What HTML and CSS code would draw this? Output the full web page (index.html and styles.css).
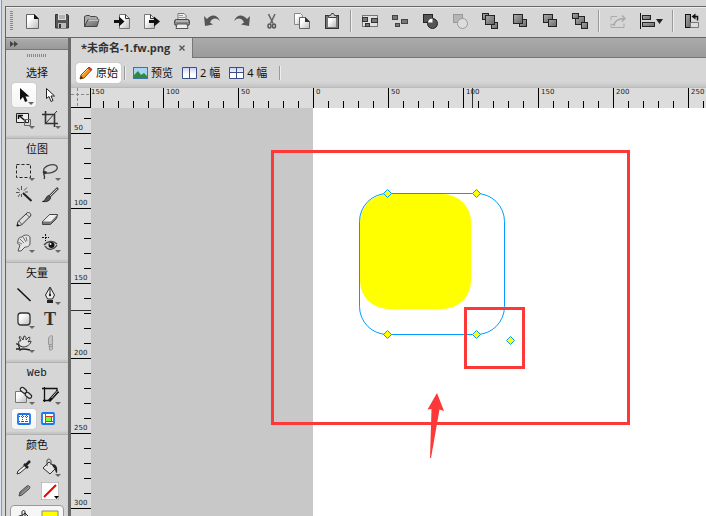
FILE: index.html
```html
<!DOCTYPE html>
<html lang="zh-CN">
<head>
<meta charset="utf-8">
<title>未命名-1.fw.png</title>
<link rel="stylesheet" href="styles.css">
</head>
<body>
<svg class="defs" aria-hidden="true">
  <defs>
    <linearGradient id="paper" x1="0" y1="0" x2="1" y2="1"><stop offset=".3" stop-color="#fff"/><stop offset="1" stop-color="#bbb"/></linearGradient>
    <linearGradient id="metal" x1="0" y1="0" x2="1" y2="1"><stop offset="0" stop-color="#aaa"/><stop offset="1" stop-color="#666"/></linearGradient>
    <linearGradient id="win" x1="0" y1="0" x2="0" y2="1"><stop offset="0" stop-color="#c3c9f2"/><stop offset=".6" stop-color="#fff"/></linearGradient>
  </defs>
</svg>
<div class="app">
  <div class="edge"></div>
  <div class="frame">
    <header class="toolbar">
      <span class="grip"></span>
      <button class="tool" aria-label="新建"><svg viewBox="0 0 18 18"><path d="M3.500 2.500h8l4 4v10h-12z" fill="url(#paper)" stroke="#666"/><path d="M11 2v5h5z" fill="#111"/></svg></button>
      <button class="tool" aria-label="保存"><svg viewBox="0 0 18 18"><path d="M2.500 2.500h12l1 1v12.500h-13z" fill="#555" stroke="#333"/><path d="M5 2h8v6H5z" fill="#ddd"/><path d="M6 4h6M6 6h6" stroke="#888"/><path d="M5 11h8v5H5z" fill="#bbb"/><path d="M6 12h2v4H6z" fill="#333"/></svg></button>
      <button class="tool" aria-label="打开"><svg viewBox="0 0 18 18"><path d="M1.500 14.500v-10l2-1h3l1 1h5l2 1v3" fill="#aaa" stroke="#444"/><path d="M1.500 14.500 5 7.500h11l-2 7z" fill="url(#metal)" stroke="#444"/><path d="M5.500 8h10" stroke="#eee"/></svg></button>
      <button class="tool" aria-label="导入"><svg viewBox="0 0 18 18"><path d="M6.500 2.500h6l4 4v10h-10z" fill="url(#paper)" stroke="#777"/><path d="M12.500 2.500v4h4" fill="none" stroke="#333"/><path d="M1 8h5V4.500l5.500 5-5.500 5V11H1z" fill="#111"/></svg></button>
      <button class="tool" aria-label="导出"><svg viewBox="0 0 18 18"><path d="M1.500 2.500h6l4 4v10h-10z" fill="url(#paper)" stroke="#777"/><path d="M7.500 2.500v4h4" fill="none" stroke="#333"/><path d="M6 8h5V4.500l6 5-6 5V11H6z" fill="#111"/></svg></button>
      <button class="tool" aria-label="打印"><svg viewBox="0 0 18 18"><path d="M5 7V1.500h6l2 2V7" fill="#eee" stroke="#777"/><path d="M6 3.500h4M6 5.500h6" stroke="#999"/><rect x="1.500" y="7.500" width="15" height="6" rx="2" fill="#888" stroke="#444"/><path d="M3 9h12" stroke="#ddd"/><path d="m4 12-1 4.500h12L14 12z" fill="#eee" stroke="#555"/></svg></button>
      <button class="tool" aria-label="撤销"><svg viewBox="0 0 18 18"><path d="M1 4 2 14l8-1.500-3-2C9 6 13 5 17 9 14 2 8 2 4 7z" fill="#555"/></svg></button>
      <button class="tool" aria-label="重做"><svg viewBox="0 0 18 18"><path d="M17 4 16 14l-8-1.500 3-2C9 6 5 5 1 9 4 2 10 2 14 7z" fill="#555"/></svg></button>
      <button class="tool" aria-label="剪切"><svg viewBox="0 0 18 18"><path d="M5.500 2l4.500 9.500M12 2l-4.500 9.500" stroke="#666" stroke-width="1.600"/><g fill="none" stroke="#555" stroke-width="1.500"><ellipse cx="6.500" cy="14" rx="1.500" ry="2"/><ellipse cx="11" cy="14" rx="1.500" ry="2"/></g></svg></button>
      <button class="tool" aria-label="复制"><svg viewBox="0 0 18 18"><path d="M1.500 1.500h6l2 2v9h-8z" fill="url(#paper)" stroke="#888"/><path d="M6.500 5.500h6l4 4v7h-10z" fill="url(#paper)" stroke="#666"/><path d="M12 5v5h5z" fill="#333"/></svg></button>
      <button class="tool" aria-label="粘贴"><svg viewBox="0 0 18 18"><rect x="2.500" y="3.500" width="13" height="13" fill="#777" stroke="#333"/><path d="M5 5h8v10H5z" fill="url(#paper)"/><path d="M5.500 5.500v-2h2l1-2h2l1 2h2v2z" fill="#ccc" stroke="#444"/></svg></button>
      <span class="bar"></span>
      <button class="tool" aria-label="组合"><svg viewBox="0 0 18 18"><rect x="1.500" y="3.500" width="15" height="11" fill="#e2e2e2" stroke="#111" stroke-dasharray="1 1"/><g fill="#777" stroke="#333"><rect x="1.500" y="5.500" width="5" height="4"/><rect x="10.500" y="6.500" width="6" height="4"/><rect x="4.500" y="11.500" width="4" height="3"/></g></svg></button>
      <button class="tool" aria-label="取消组合"><svg viewBox="0 0 18 18"><g fill="#777" stroke="#444"><rect x="1.500" y="3.500" width="5" height="4"/><rect x="10.500" y="7.500" width="6" height="4"/><rect x="4.500" y="11.500" width="4" height="3"/></g></svg></button>
      <button class="tool" aria-label="联合"><svg viewBox="0 0 18 18"><rect x="2.500" y="2.500" width="9" height="8" fill="#555" stroke="#222"/><circle cx="11.500" cy="11.500" r="5" fill="#555" stroke="#222"/><path d="M7 10.500h4.500V6.500C9 6.500 7 8 7 10.500" fill="#fff"/></svg></button>
      <button class="tool" aria-label="拆分" disabled><svg viewBox="0 0 18 18"><rect x="2.500" y="2.500" width="9" height="8" fill="#b5b5b5" stroke="#999"/><circle cx="11.500" cy="11.500" r="5" fill="#ddd" stroke="#999"/></svg></button>
      <button class="tool" aria-label="移到最前"><svg viewBox="0 0 18 18"><g fill="url(#metal)" stroke="#222"><rect x="1.500" y="1.500" width="6" height="6"/><rect x="10.500" y="10.500" width="6" height="6"/><rect x="4.500" y="3.500" width="9" height="9"/></g></svg></button>
      <button class="tool" aria-label="前移"><svg viewBox="0 0 18 18"><g fill="url(#metal)" stroke="#222"><rect x="8.500" y="7.500" width="7" height="7"/><rect x="2.500" y="2.500" width="9" height="9"/></g></svg></button>
      <button class="tool" aria-label="后移"><svg viewBox="0 0 18 18"><g fill="url(#metal)" stroke="#222"><rect x="2.500" y="2.500" width="9" height="8"/><rect x="7.500" y="7.500" width="8" height="7"/></g></svg></button>
      <button class="tool" aria-label="移到最后"><svg viewBox="0 0 18 18"><g fill="url(#metal)" stroke="#222"><rect x="4.500" y="4.500" width="9" height="8"/><rect x="1.500" y="1.500" width="6" height="5"/><rect x="10.500" y="10.500" width="6" height="6"/></g></svg></button>
      <span class="bar"></span>
      <button class="tool" aria-label="转换" disabled><svg viewBox="0 0 18 18"><g fill="none" stroke="#aaa"><path d="M2 8.500v-4h6M2 11.500v4h13v-4M2.500 12.500h3"/><path d="M5 14c0-5 3-7 10-7.500M13 3.500l3 3-3 3" stroke-width="1.500"/></g></svg></button>
      <button class="tool tool-wide" aria-label="对齐"><svg class="wide" viewBox="0 0 26 18"><path d="M2.500 1v16" stroke="#111"/><rect x="4.500" y="3.500" width="8" height="4" fill="url(#metal)" stroke="#222"/><rect x="4.500" y="10.500" width="12" height="4" fill="url(#metal)" stroke="#222"/><path d="M18 7h7l-3.500 5z" fill="#222"/></svg></button>
      <span class="bar"></span>
      <button class="tool" aria-label="旋转"><svg viewBox="0 0 18 18"><rect x="2.500" y="2.500" width="5" height="13" fill="url(#metal)" stroke="#111"/><path d="M7.500 15.500h8v-5h-8z" fill="#ddd" stroke="#777"/><path d="M10 4.500h4.500v4" fill="none" stroke="#111" stroke-width="1.500"/><path d="M8.500 4.500l4-3v6z" fill="#111"/></svg></button>
    </header>
    <div class="work">
      <aside class="panel">
        <div class="panel-head"><svg class="chev" viewBox="0 0 8 6"><path d="M0 0l4 3-4 3zM4 0l4 3-4 3z" fill="#444"/></svg></div>
        <div class="panel-grip"></div>
        <section class="group">
          <h2>选择</h2>
          <div class="grid">
            <button class="cell on" aria-label="指针"><svg viewBox="0 0 18 18"><path d="M5 2v12l3-3 2 5 2.500-1-2-4.500h4z" fill="#111"/></svg><i></i></button>
            <button class="cell" aria-label="部分选定"><svg viewBox="0 0 18 18"><path d="M5.500 2.500v10l2.500-2 2 5 2-1-2-4.500h3.500z" fill="#fff" stroke="#222"/></svg></button>
            <button class="cell" aria-label="缩放"><svg viewBox="0 0 18 18"><path d="M1.500 3.500h12v9h-12z" fill="#eee" stroke="#222"/><path d="M4 5.500l7 6M3.500 9V5.500H8" fill="none" stroke="#111" stroke-width="1.500"/><path d="M9.500 9.500h6v6h-6z" fill="none" stroke="#666"/></svg><i></i></button>
            <button class="cell" aria-label="裁剪"><svg viewBox="0 0 18 18"><path d="M4.500 1v12.500H17M1 4.500h12.500V17" fill="none" stroke="#333" stroke-width="1.600"/><path d="M4 14 16 1" stroke="#333"/></svg><i></i></button>
          </div>
        </section>
        <section class="group">
          <h2>位图</h2>
          <div class="grid">
            <button class="cell" aria-label="选取框"><svg viewBox="0 0 18 18"><rect x="1.500" y="2.500" width="14" height="13" fill="none" stroke="#222" stroke-dasharray="3 2"/></svg><i></i></button>
            <button class="cell" aria-label="套索"><svg viewBox="0 0 18 18"><ellipse cx="9.500" cy="7" rx="7" ry="4" fill="none" stroke="#444" stroke-width="1.300" transform="rotate(-15 9 7)"/><path d="M3 9c-2 2 1 3 2 2s-1-2-2 0c-1 3 2 3 0 6" fill="none" stroke="#333" stroke-width="1.300"/></svg><i></i></button>
            <button class="cell" aria-label="魔术棒"><svg viewBox="0 0 18 18"><path d="M8 7l8.500 8" stroke="#222" stroke-width="2"/><path d="M6.500 0v4M6.500 8v3M1 6.500h3.500M9 4.500l3-3M2 2l3 2.500M3 11l2-3M10 6h3" stroke="#555"/></svg></button>
            <button class="cell" aria-label="刷子"><svg viewBox="0 0 18 18"><path d="M17 2 9 10" stroke="#444" stroke-width="2.500"/><path d="M16 3 9 10" stroke="#ccc"/><path d="M1.500 15.500c4-1 3-6 7-6 3 3-1 7-7 6z" fill="#555" stroke="#222"/></svg></button>
            <button class="cell" aria-label="铅笔"><svg viewBox="0 0 18 18"><path d="M2 16l1-4.500L12 3c1-1.500 5 .500 3.500 3L6.500 15z" fill="#ddd" stroke="#333"/><path d="M11 4l4 3.500M4 11l3 3.500" stroke="#666"/><path d="M1.500 16.500l1-3 2 2z" fill="#111"/></svg></button>
            <button class="cell" aria-label="橡皮擦"><svg viewBox="0 0 18 18"><path d="M1.500 11.500 8.500 4.500h8l-1 4-6 6h-8z" fill="#777" stroke="#444"/><path d="M2 11.500 8.500 5H16l-6 6.500z" fill="#eee"/></svg></button>
            <button class="cell" aria-label="模糊"><svg viewBox="0 0 18 18"><path d="M3 17l2-6C2 10 2 8 3 7c0-3 2-4 4-4 2-3 7-2 8 0v7c-1 3-3 3-5 3l-4 4z" fill="#e4e4e4" stroke="#555"/><path d="M5 5l4 4M8 3l3 5M3 8l4 2M11 3l1 4" stroke="#777"/></svg><i></i></button>
            <button class="cell" aria-label="红眼消除"><svg viewBox="0 0 18 18"><path d="M4.500 0v7M1 3.500h7" stroke="#111" stroke-dasharray="2 1"/><path d="M3 11c3-4 9-5 13-1M4 12c3 5 9 4 12-1" fill="none" stroke="#444" stroke-width="1.300"/><circle cx="10.500" cy="11" r="3" fill="#111"/><circle cx="9.500" cy="10" r="1" fill="#fff"/></svg><i></i></button>
          </div>
        </section>
        <section class="group">
          <h2>矢量</h2>
          <div class="grid">
            <button class="cell" aria-label="直线"><svg viewBox="0 0 18 18"><path d="M2.500 2.500 15.500 15" stroke="#111" stroke-width="1.500"/></svg></button>
            <button class="cell" aria-label="钢笔"><svg viewBox="0 0 18 18"><path d="M9 1 4.500 9l2 4h5l2-4z" fill="#eee" stroke="#222"/><path d="M9 2v6" stroke="#222"/><circle cx="9" cy="9" r="1.200" fill="#222"/><path d="M6 14h6v3H6z" fill="#222"/></svg><i></i></button>
            <button class="cell" aria-label="圆角矩形"><svg viewBox="0 0 18 18"><rect x="3" y="3" width="12" height="12" rx="3" fill="url(#paper)" stroke="#333" stroke-width="1.300"/></svg><i></i></button>
            <button class="cell letter" aria-label="文本">T</button>
            <button class="cell" aria-label="自由变形"><svg viewBox="0 0 18 18"><path d="M5 12C3 9 3 6 6 7L4 3c1-1 2 0 4 3L9 2c2 0 2 2 2 4l3-3c2 0 0 3-1 5l3-1c0 3-4 6-8 6z" fill="#e4e4e4" stroke="#333"/><path d="M1 10c3-1 3 3 4 6 2-2 6-1 10 0M1 15h4" fill="none" stroke="#222" stroke-width="1.300"/></svg><i></i></button>
            <button class="cell" aria-label="刀子" disabled><svg viewBox="0 0 18 18"><path d="M7.500 10.500V4c1-2 3-3 4-2v8.500zM7.500 12.500h4M8.500 11v5h2l1-1v-4" fill="#c4c4c4" stroke="#999"/></svg></button>
          </div>
        </section>
        <section class="group group-short">
          <h2 class="latin">Web</h2>
          <div class="grid">
            <button class="cell" aria-label="热点"><svg viewBox="0 0 18 18"><path d="M.500 5.500h11v11h-11z" fill="url(#paper)" stroke="#777"/><g fill="#ddd" stroke="#222" stroke-width="1.200"><rect x="5" y="2" width="7" height="4" rx="2" transform="rotate(40 8 4)"/><rect x="10" y="7" width="7" height="4" rx="2" transform="rotate(40 13 9)"/></g></svg><i></i></button>
            <button class="cell" aria-label="切片"><svg viewBox="0 0 18 18"><path d="M3.500 1v15M1 2.500h15v3M2 14.500h7" fill="none" stroke="#111" stroke-width="1.300"/><path d="M17 5 8 15" stroke="#111" stroke-width="3"/><path d="M16.500 5l-6 7" stroke="#bbb"/></svg><i></i></button>
            <button class="cell on cell-low" aria-label="隐藏切片"><svg viewBox="0 0 18 18"><rect x="3" y="4" width="12" height="10" rx="1" fill="#fff" stroke="#1976ed" stroke-width="1.800"/><path d="M4 6.500h10M4 11.500h10M7.500 5v8M11.500 5v8" stroke="#555" stroke-dasharray="1 1"/></svg></button>
            <button class="cell cell-low" aria-label="显示切片"><svg viewBox="0 0 18 18"><rect x="1" y="3" width="12" height="11" rx="1" fill="#fff" stroke="#1976ed" stroke-width="1.800"/><path d="M5 6h5v5H5z" fill="#7f3"/><path d="M4.500 4v9M4 6.500h8M4 11.500h8M10.500 6v5" stroke="#d32"/></svg></button>
          </div>
        </section>
        <section class="group">
          <h2>颜色</h2>
          <div class="grid">
            <button class="cell" aria-label="滴管"><svg viewBox="0 0 18 18"><path d="M2 16l1-3 7-6 2 2-7 6z" fill="#eee" stroke="#333"/><path d="M9 6l4 4M11 7l4-4" stroke="#222" stroke-width="2.500"/></svg></button>
            <button class="cell" aria-label="油漆桶"><svg viewBox="0 0 18 18"><path d="M2 10l6-6 7 6-6 6z" fill="#e4e4e4" stroke="#333"/><path d="M6 8V3c0-3 4-2 4 0v4" fill="none" stroke="#444"/><path d="M11 6c4 0 6 3 5 9-2 0-1-4-4-6z" fill="#222"/></svg><i></i></button>
            <button class="cell" aria-label="笔触颜色"><svg viewBox="0 0 18 18"><path d="M4 14l1-4 7-6c2-1 4 1 2 3l-7 6z" fill="#999" stroke="#444"/><path d="M5 12l8-7" stroke="#666"/></svg></button>
            <button class="cell" aria-label="无笔触"><svg viewBox="0 0 18 18"><path d="M0 0h18v18H0z" fill="#fff" stroke="#888"/><path d="M3 15 15 3" stroke="#e00" stroke-width="2"/><path d="M13 14h5l-2.500 3z" fill="#000"/></svg></button>
          </div>
          <div class="fill">
            <button class="cell" aria-label="填充颜色"><svg viewBox="0 0 18 18"><path d="M4 9l6-5 5 5-5 6z" fill="#ddd" stroke="#222"/><path d="M7 8V3c0-2 3-2 3 0v4" fill="none" stroke="#222"/><path d="M3 7l3-1v6H3z" fill="#222"/></svg></button>
            <button class="cell" aria-label="黄色填充"><svg viewBox="0 0 18 18"><path d="M1 2h16v16H1z" fill="#ff0" stroke="#888"/></svg></button>
          </div>
        </section>
      </aside>
      <main class="doc">
        <div class="tabs"><div class="tab"><span>*未命名-1.fw.png</span><button class="close" aria-label="关闭"><svg viewBox="0 0 6 6"><path d="M.500 .500l5 5M5.500 .500l-5 5" stroke="#555" stroke-width="1.400"/></svg></button></div></div>
        <nav class="views">
          <button class="view view-on"><svg viewBox="0 0 14 14"><path d="M1 13l1-4 8-8 3 2.500L5 12z" fill="#f7941d" stroke="#8a4b12"/><path d="M3 9l7-7" stroke="#ffd36b"/><path d="M10 1l3 2.500-1.500 1.500L9 2.500z" fill="#c33"/><path d="M1 13l1-3 2 2z" fill="#222"/></svg>原始</button>
          <span class="bar"></span>
          <button class="view"><svg class="pic" viewBox="0 0 15 12"><rect x=".500" y=".500" width="14" height="11" fill="#a9d5f5" stroke="#4470a8"/><path d="M1 8l4-4 3 4 3-2 3 3v2H1z" fill="#2e8b37"/></svg>预览</button>
          <button class="view"><svg class="pic" viewBox="0 0 15 12"><path d="M.500 .500h14v11H.500zM7.500 0v12" fill="url(#win)" stroke="#3a4f86"/></svg>2 幅</button>
          <button class="view"><svg class="pic" viewBox="0 0 15 12"><path d="M.500 .500h14v11H.500zM7.500 0v12M0 5.500h15" fill="url(#win)" stroke="#3a4f86"/></svg>4 幅</button>
          <span class="bar"></span>
        </nav>
        <div class="stage">
          <div class="corner"></div>
          <div class="ruler-x"><span class="first">150</span><span>100</span><span>50</span><span>0</span><span>50</span><span class="mark">100</span><span>150</span><span>200</span><span>250</span></div>
          <div class="ruler-y"><span class="first">50</span><span>100</span><span>150</span><span class="mark">200</span><span>250</span><span>300</span></div>
          <div class="canvas">
            <svg class="art" aria-label="画布">
              <g transform="translate(-91 -108)">
                <rect x="360" y="194" width="111" height="115" rx="28" fill="#ff0"/>
                <rect x="359.500" y="193.500" width="145" height="141" rx="28" fill="none" stroke="#009dff"/>
                <g fill="#ff0" stroke="#009dff"><path d="M387.500 189.500l4 4-4 4-4-4z"/><path d="M476.500 189.500l4 4-4 4-4-4z" stroke="#4f8fa0"/><path d="M387.500 330.500l4 4-4 4-4-4z" stroke="#4f8fa0"/><path d="M476.500 330.500l4 4-4 4-4-4z"/><path d="M510.500 336.500l4 4-4 4-4-4z"/></g>
                <g fill="none" stroke="#fd3838" stroke-width="3"><rect x="272.500" y="151.500" width="356" height="272"/><rect x="465.500" y="308.500" width="58" height="59"/></g>
                <path d="M437 393l7 18-4.500-1.500L431 458h-1l1.500-49-4 .500z" fill="#fd3838"/>
              </g>
            </svg>
          </div>
        </div>
      </main>
    </div>
  </div>
</div>
</body>
</html>
```

FILE: styles.css
```css
* { box-sizing: border-box; }
body { margin: 0; font: 11px/16px "Noto Sans", "Noto Sans CJK SC", sans-serif; color: #111; }
button { border: 0; padding: 0; margin: 0; background: none; font: inherit; color: inherit; }
svg { display: block; }
.defs { position: absolute; width: 0; height: 0; }

.app { display: flex; height: 100vh; overflow: hidden; background: #d6d6d6; }
.edge { width: 5px; flex: none; border-left: 1px solid #dbe6f2; box-shadow: inset 1px 0 #8f969e; }
.frame { flex: 1; min-width: 0; margin-top: 6px; display: flex; flex-direction: column; border-top: 1px solid #666; border-left: 1px solid #666; }

.toolbar { display: flex; flex: none; align-items: center; height: 31px; overflow: hidden; padding: 0 0 3px 4px; border-top: 1px solid #eee; border-bottom: 1px solid #666; }
.grip { flex: none; width: 3px; height: 20px; margin-right: 4px; background: repeating-linear-gradient(#888 0 1px, transparent 1px 2px); }
.tool { flex: none; display: grid; place-items: center; width: 30px; height: 28px; }
.tool svg { width: 18px; height: 18px; }
.tool-wide { width: 36px; }
.tool svg.wide { width: 26px; }
.bar { flex: none; width: 2px; height: 22px; margin: 0 3px; border-left: 1px solid #999; border-right: 1px solid #eee; }

.work { flex: 1; min-height: 0; display: flex; }
.panel { flex: none; width: 65px; overflow: hidden; border-right: 3px solid #6a6a6a; }
.panel-head { height: 12px; padding: 2px 4px; background: linear-gradient(#aaa, #999); border-top: 1px solid #bbb; border-bottom: 1px solid #777; }
.chev { width: 8px; height: 6px; }
.panel-grip { width: 20px; height: 3px; margin: 4px auto 6px; background: repeating-linear-gradient(90deg, #888 0 1px, transparent 1px 2px); }
.group { padding-bottom: 7px; border-bottom: 1px solid #b2b2b2; box-shadow: inset 0 -2px 2px #c4c4c4; }
.group-short { padding-bottom: 3px; }
.group h2 { margin: 0; height: 20px; font-size: 11px; line-height: 20px; font-weight: 400; text-align: center; }
.group h2.latin { font-family: "Liberation Mono", monospace; }
.grid, .fill { display: grid; grid-template-columns: 26px 26px; justify-content: center; grid-auto-rows: 24px; }
.cell { position: relative; display: grid; place-items: center; }
.cell svg { width: 18px; height: 18px; }
.cell i { position: absolute; right: 2px; bottom: 2px; border: 3px solid transparent; border-top-color: #666; border-bottom: 0; }
.on { margin: 0 1px; border-radius: 3px; background: linear-gradient(#fff, #f4f4f4); box-shadow: 0 0 1px #888; }
.cell-low { height: 20px; align-self: center; }
.letter { font: bold 18px/24px "Liberation Serif", serif; color: #333; }
.fill { margin: 2px 4px 0; border: 1px solid #999; border-radius: 4px; background: #f6f6f6; }

.doc { flex: 1; min-width: 0; display: flex; flex-direction: column; }
.tabs { flex: none; height: 20px; display: flex; background: linear-gradient(#aaa, #9b9b9b); border-bottom: 1px solid #777; }
.tab { display: flex; align-items: center; gap: 9px; height: 20px; padding: 0 7px 0 10px; background: #d6d6d6; border-right: 1px solid #777; font: bold 11px/20px "Open Sans", "Noto Sans CJK SC", sans-serif; color: #333; }
.close svg { width: 6px; height: 6px; }
.views { flex: none; display: flex; align-items: center; height: 30px; padding-left: 5px; border-bottom: 1px solid #bbb; background: linear-gradient(#d6d6d6 80%, #c4c4c4); }
.view { display: flex; align-items: center; gap: 3px; height: 20px; margin-right: 9px; white-space: nowrap; }
.view svg { width: 14px; height: 14px; }
.view svg.pic { width: 15px; height: 12px; }
.view-on { padding: 0 3px; margin-right: 0; background: #fff; border-radius: 3px; box-shadow: 0 0 1px #888; }
.views .bar { height: 14px; }
.view-on + .bar { margin-right: 7px; }

.stage { flex: 1; min-height: 0; display: grid; grid-template: 20px 1fr / 20px 1fr; font: 7px/8px "DejaVu Sans", sans-serif; color: #222; }
.corner { border-right: 1px solid #000; border-bottom: 1px solid #000; background: repeating-linear-gradient(90deg, #888 0 3px, transparent 3px 5px) 0 6px / 100% 1px no-repeat, repeating-linear-gradient(#888 0 3px, transparent 3px 5px) 6px 0 / 1px 100% no-repeat, #dcdcdc; }
.ruler-x { display: flex; overflow: hidden; background: #dcdcdc; }
.ruler-x span { position: relative; flex: none; width: 75px; padding: 0 0 0 3px; background: repeating-linear-gradient(270deg, transparent 0 14px, #000 14px 15px) 0 100% / 100% 7px no-repeat, linear-gradient(#000, #000) 0 0 / 1px 100% no-repeat; }
.ruler-x .first { width: 72px; padding-left: 0; background: repeating-linear-gradient(270deg, transparent 0 14px, #000 14px 15px) 0 100% / 100% 7px no-repeat; }
.ruler-x .mark::after { content: ""; position: absolute; left: 9px; top: 0; width: 1px; height: 20px; background: #333; }
.ruler-y { overflow: hidden; display: flex; flex-direction: column; background: #dcdcdc; }
.ruler-y span { position: relative; flex: none; display: flex; align-items: flex-end; height: 75px; padding: 0 0 2px 3px; background: repeating-linear-gradient(0deg, #000 0 1px, transparent 1px 15px) 100% 0 / 7px 100% no-repeat, linear-gradient(#000, #000) 0 100% / 100% 1px no-repeat; }
.ruler-y .first { height: 26px; }
.ruler-y .mark::after { content: ""; position: absolute; left: 0; top: 26px; width: 20px; height: 1px; background: #333; }
.canvas { position: relative; min-width: 0; overflow: hidden; background: linear-gradient(#c8c8c8, #c8c8c8) 0 0 / 222px 100% no-repeat, #fff; }
.art { position: absolute; inset: 0; width: 100%; height: 100%; }
```
